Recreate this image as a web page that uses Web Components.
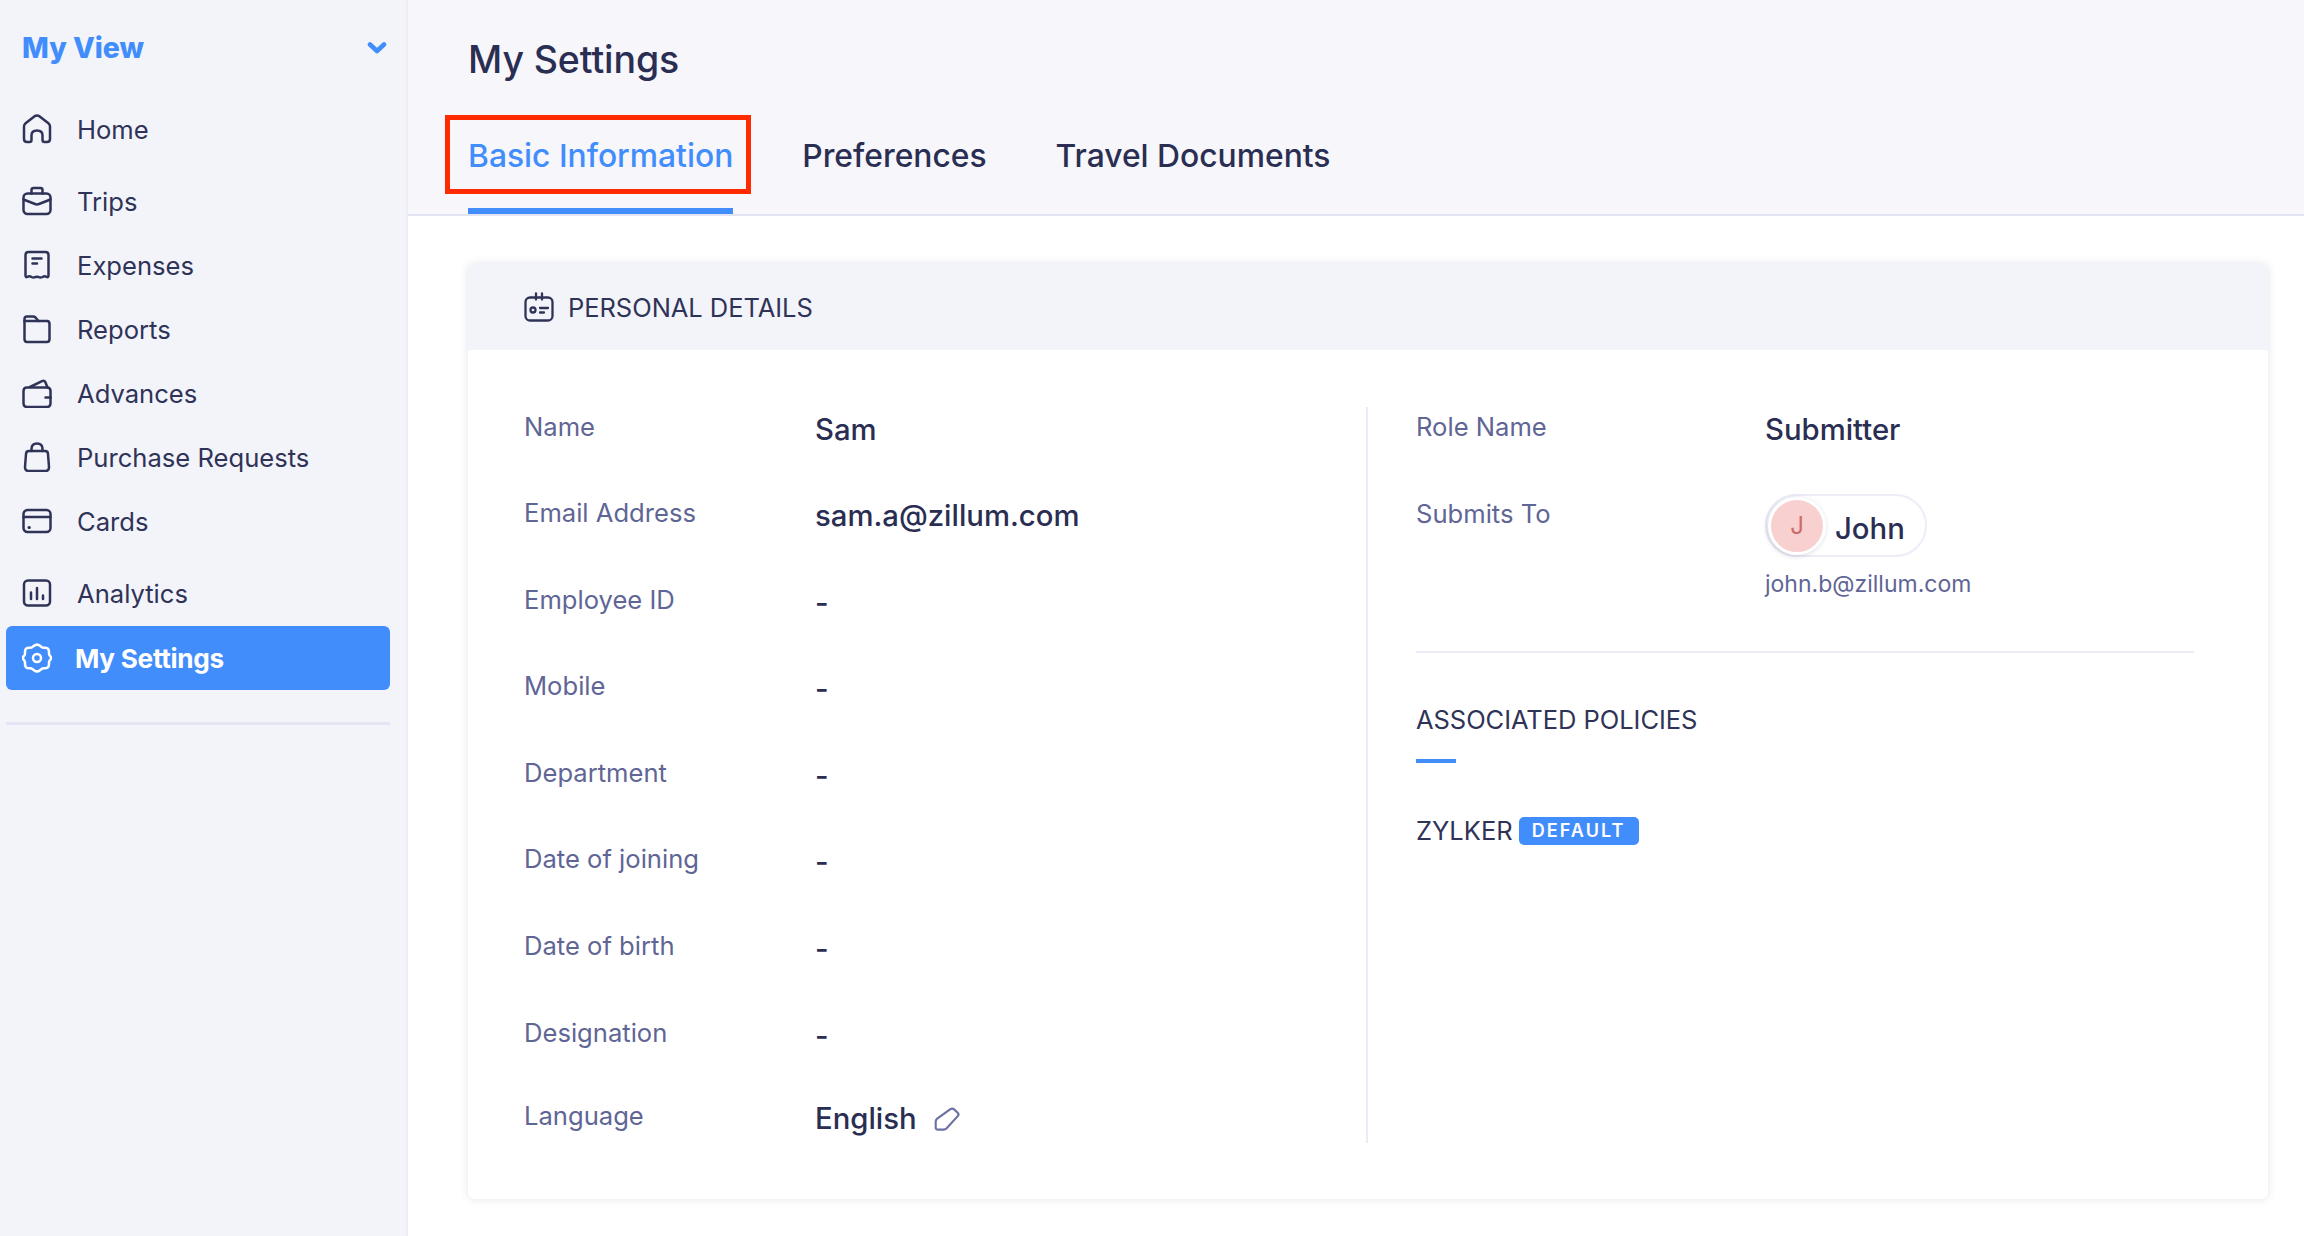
<!DOCTYPE html>
<html><head><meta charset="utf-8"><style>
html,body{margin:0;height:100%;background:#fff;overflow:hidden}
body{font-family:Inter,"Liberation Sans",sans-serif;color:#2a2e52}
#app{display:flex;height:1236px;width:2304px}
</style></head><body>
<div id="app">
<side-nav></side-nav>
<main-area></main-area>
</div>
<script>
const ICONS={
home:'<path d="M2 12.5Q2 10.5 3.6 9.2L12.6 2.2Q15 .8 17.4 2.2L26.4 9.2Q28 10.5 28 12.5V25Q28 28 25 28H22.5Q20.5 28 20.5 26V21.5Q20.5 16.5 15 16.5T9.5 21.5V26Q9.5 28 7.5 28H5Q2 28 2 25Z"/>',
trips:'<rect x="1.5" y="7.5" width="27" height="20.5" rx="4"/><path d="M9.5 7.5V4Q9.5 2 11.5 2H18.5Q20.5 2 20.5 4V7.5"/><path d="M1.5 13.5L13 18Q15 18.8 17 18L28.5 13.5"/>',
expenses:'<path d="M3.5 25.5V5Q3.5 2 6.5 2H23.5Q26.5 2 26.5 5V25.5Q26.5 28 24.5 26.8Q22.5 25.8 20.5 27Q18.5 28 16.5 27Q15 26.3 13.5 27Q11.5 28 9.5 27Q7.5 25.8 5.5 26.8Q3.5 28 3.5 25.5Z"/><path d="M10.5 8.5H19.5M10.5 13.5H15"/>',
reports:'<path d="M2.5 25V5Q2.5 2.5 5 2.5H11Q12.5 2.5 13.5 3.5L16.5 7H25Q27.5 7 27.5 10V25Q27.5 28 25 28H5Q2.5 28 2.5 25Z"/><path d="M2.5 7H16.5"/>',
advances:'<path d="M1.5 13Q1.5 9.5 5 9.5H25Q28.5 9.5 28.5 13V25Q28.5 29 25 29H5Q1.5 29 1.5 25Z"/><path d="M8 9L20 3.2Q22.5 2 23.5 4.5L25.5 9.5"/><path d="M23.5 19.5H28.5"/>',
purchase:'<path d="M4 12Q4 9 7 9H23Q26 9 26 12L27 25Q27 29 23.5 29H6.5Q3 29 3 25Z"/><path d="M9.5 9V7Q9.5 1.5 15 1.5T20.5 7V9"/>',
cards:'<rect x="1.5" y="4" width="27" height="22" rx="4"/><path d="M1.5 11H28.5"/><path d="M7 21.5H7.3" stroke-width="3"/>',
analytics:'<rect x="2" y="2.5" width="26" height="25" rx="4"/><path d="M9 14.5V21M15 10V21M21 17.5V21"/>',
settings:'<path d="M12 2.8Q15 .4 18 2.8L19.5 4Q20.5 4.8 22 4.8H23.5Q27 5 27 9L27 10.5Q27 11.5 27.7 12.5L28.5 13.5Q30 15 28.5 16.5L27.7 17.5Q27 18.5 27 19.5V21Q27 25 23.5 25.2H22Q20.5 25.2 19.5 26L18 27.2Q15 29.6 12 27.2L10.5 26Q9.5 25.2 8 25.2H6.5Q3 25 3 21V19.5Q3 18.5 2.3 17.5L1.5 16.5Q0 15 1.5 13.5L2.3 12.5Q3 11.5 3 10.5V9Q3 5 6.5 4.8H8Q9.5 4.8 10.5 4Z"/><circle cx="15" cy="15" r="4"/>',
idcard:'<rect x="1.5" y="5.5" width="27" height="23" rx="4.5"/><path d="M12 1.5V7.5M18 1.5V7.5"/><circle cx="9" cy="18" r="2.5"/><path d="M16 16H24M16 20.5H20" />',
pencil:'<path d="M14.5 1.8Q16 .8 17.5 1.8L21 5Q22.3 6.5 21 8L11 19Q10 20 8.5 20H3.5Q1.5 20 1.5 18V13Q1.5 11.5 2.5 10.5Z" stroke-linejoin="round"/>'
};
function icon(n,size=30,sw=2.5,col='currentColor'){const vb=n==='pencil'?'0 0 23 22':'0 0 30 30';const w=n==='pencil'?26:size;return `<svg width="${w}" height="${n==='pencil'?25:size}" viewBox="${vb}" fill="none" stroke="${col}" stroke-width="${sw}" stroke-linecap="round" stroke-linejoin="round" style="display:block;flex:none">${ICONS[n]}</svg>`}

function def(name,cls){customElements.define(name,cls)}
class Base extends HTMLElement{
  constructor(){super();this.attachShadow({mode:'open'})}
}
def('nav-item',class extends Base{connectedCallback(){
 this.shadowRoot.innerHTML=`<style>
 :host{display:flex;align-items:center;height:64px;box-sizing:border-box;padding-left:16px;margin-right:16px;margin-left:6px;font-size:25.6px;color:#2f3357;border-radius:6px}
 :host([active]){background:#418dfc;color:#fff;font-weight:700;letter-spacing:-.3px;margin-top:1px;font-size:26.2px}
 .i{margin-right:25px;display:flex}
 :host([active]) .i{margin-right:23px}
 </style><span class="i">${icon(this.getAttribute('icon'))}</span><slot></slot>`;
}});
def('side-nav',class extends Base{connectedCallback(){
 this.shadowRoot.innerHTML=`<style>
 :host{display:block;width:408px;flex:none;box-sizing:border-box;height:100%;background:#f3f4fa;border-right:2px solid #ecedf6}
 .top{display:flex;align-items:center;justify-content:space-between;height:96px;padding:0 19px 0 22px;color:#418dfc;font-size:28.4px;font-weight:800}
 .top span{position:relative;top:-1px}
 svg{display:block}
 .g1{padding-top:1px}
 .gap{height:8px}
 hr{height:3px;border:0;background:#e3e4f4;margin:32px 16px 0 6px}
 </style>
 <div class="top"><span>My View</span><svg width="20" height="14" viewBox="0 0 20 14" fill="none" stroke="#418dfc" stroke-width="4.6" stroke-linecap="round" stroke-linejoin="round"><path d="M3 3.5L10 10L17 3.5"/></svg></div>
 <div class="g1"><nav-item icon="home">Home</nav-item></div><div class="gap"></div>
 <nav-item icon="trips">Trips</nav-item>
 <nav-item icon="expenses">Expenses</nav-item>
 <nav-item icon="reports">Reports</nav-item>
 <nav-item icon="advances">Advances</nav-item>
 <nav-item icon="purchase">Purchase Requests</nav-item>
 <nav-item icon="cards">Cards</nav-item><div class="gap"></div>
 <nav-item icon="analytics">Analytics</nav-item>
 <nav-item icon="settings" active>My Settings</nav-item>
 <hr>`;
}});
def('tab-bar',class extends Base{connectedCallback(){
 this.shadowRoot.innerHTML=`<style>
 :host{display:block;background:#f6f6fb;border-bottom:2px solid #e2e3f3;height:216px;box-sizing:border-box;padding:0 0 0 60px;position:relative}
 h1{margin:0;font-size:37.5px;font-weight:500;line-height:120px;height:115px;color:#2a2e52;letter-spacing:-.1px}
 .tabs{display:flex;gap:69px;height:99px;font-size:31.8px;font-weight:500;color:#2a2e52}
 .t{display:block;padding-top:21px;line-height:40px;height:99px;box-sizing:border-box}
 .a{color:#418dfc;border-bottom:6px solid #418dfc;position:relative}
 .mark{position:absolute;left:-23px;top:0;width:306px;height:79px;box-sizing:border-box;border:5px solid #ff2a00;pointer-events:none}
 </style><h1>My Settings</h1><div class="tabs"><span class="t a">Basic Information<span class="mark"></span></span><span class="t">Preferences</span><span class="t">Travel Documents</span></div>`;
}});
def('info-row',class extends Base{connectedCallback(){
 this.shadowRoot.innerHTML=`<style>
 :host{display:flex;align-items:flex-start;font-size:25.6px;color:#5f6595}
 .l{width:var(--lw,291px);flex:none;line-height:34px;padding-top:.5px}
 .v{color:#2a2e52;font-size:29.3px;font-weight:500;line-height:36px;padding-top:2.5px;display:flex;align-items:center;gap:17px;min-width:0}
 </style><span class="l">${this.getAttribute('label')}</span><div class="v"><slot></slot></div>`;
}});
def('user-chip',class extends Base{connectedCallback(){
 this.shadowRoot.innerHTML=`<style>
 :host{display:block;margin-top:-4.5px}
 .p{display:inline-flex;align-items:center;box-sizing:border-box;height:63px;width:162px;border:2px solid #ecedf7;border-radius:32px;background:#fff}
 .a{width:58px;height:58px;box-sizing:border-box;border:3px solid #fff;border-radius:50%;background:#f9d0d0;color:#cd6b6b;font-size:24px;font-weight:400;display:flex;align-items:center;justify-content:center;box-shadow:-1px 1px 5px rgba(60,60,100,.22);margin-left:1px;flex:none}
 .n{margin-left:9px;padding-top:6px;font-size:29.3px;font-weight:500;color:#2a2e52}
 .m{display:block;margin-top:10px;font-size:23px;font-weight:400;color:#5f6595;line-height:34px}
 </style><div class="p"><span class="a">J</span><span class="n"><slot></slot></span></div><span class="m">${this.getAttribute('email')}</span>`;
}});
def('policy-badge',class extends Base{connectedCallback(){
 this.shadowRoot.innerHTML=`<style>
 :host{display:inline-flex;align-items:center;justify-content:center;width:120px;height:28px;background:#418dfc;color:#fff;border-radius:5px;font-size:18px;font-weight:600;letter-spacing:2.1px}
 </style><slot></slot>`;
}});
def('details-card',class extends Base{connectedCallback(){
 const dash='-';
 this.shadowRoot.innerHTML=`<style>
 :host{display:block;margin:48px 36px 0 60px;height:935px;background:#fff;border-radius:7px;box-shadow:0 0 9px rgba(90,95,140,.17);box-sizing:border-box;overflow:hidden}
 .h{height:86px;background:#f3f4fa;display:flex;align-items:center;padding-left:56px;gap:14px;font-size:25.5px;color:#2f3357;letter-spacing:-.05px}
 .b{display:grid;grid-template-columns:900px 1fr;padding:57px 0 0}
 .lc{box-sizing:border-box;border-right:2px solid #ebecf5;height:736px;padding:2px 0 0 56px;display:flex;flex-direction:column}
 .lc info-row{height:86.6px}
 .lc info-row.last{height:auto;margin-top:-3px}
 .rc{padding:2px 74px 0 48px}
 .rc>info-row{--lw:349px}
 .r1{height:87px}
 .r2{height:157px;border-bottom:2px solid #ebecf5;box-sizing:border-box}
 h3{margin:49px 0 0;font-size:25.5px;font-weight:400;line-height:36px;color:#2f3357;letter-spacing:-.05px}
 .ac{width:40px;height:4px;background:#418dfc;margin-top:20.5px}
 .z{display:flex;align-items:center;gap:6px;margin-top:54px;font-size:25.5px;color:#2f3357;line-height:28px}
 </style>
 <div class="h">${icon('idcard',30,2.3)}<span>PERSONAL DETAILS</span></div>
 <div class="b"><div class="lc">
 <info-row label="Name">Sam</info-row>
 <info-row label="Email Address">sam.a@zillum.com</info-row>
 <info-row label="Employee ID">${dash}</info-row>
 <info-row label="Mobile">${dash}</info-row>
 <info-row label="Department">${dash}</info-row>
 <info-row label="Date of joining">${dash}</info-row>
 <info-row label="Date of birth">${dash}</info-row>
 <info-row label="Designation">${dash}</info-row>
 <info-row class="last" label="Language">English ${icon('pencil',24,1.9,'#6c71a3')}</info-row>
 </div><div class="rc">
 <info-row class="r1" label="Role Name">Submitter</info-row>
 <info-row class="r2" label="Submits To"><user-chip email="john.b@zillum.com">John</user-chip></info-row>
 <h3>ASSOCIATED POLICIES</h3><div class="ac"></div>
 <div class="z"><span>ZYLKER</span><policy-badge>DEFAULT</policy-badge></div>
 </div></div>`;
}});
def('main-area',class extends Base{connectedCallback(){
 this.shadowRoot.innerHTML=`<style>:host{display:block;flex:1;min-width:0}</style><tab-bar></tab-bar><details-card></details-card>`;
}});
</script>
</body></html>
